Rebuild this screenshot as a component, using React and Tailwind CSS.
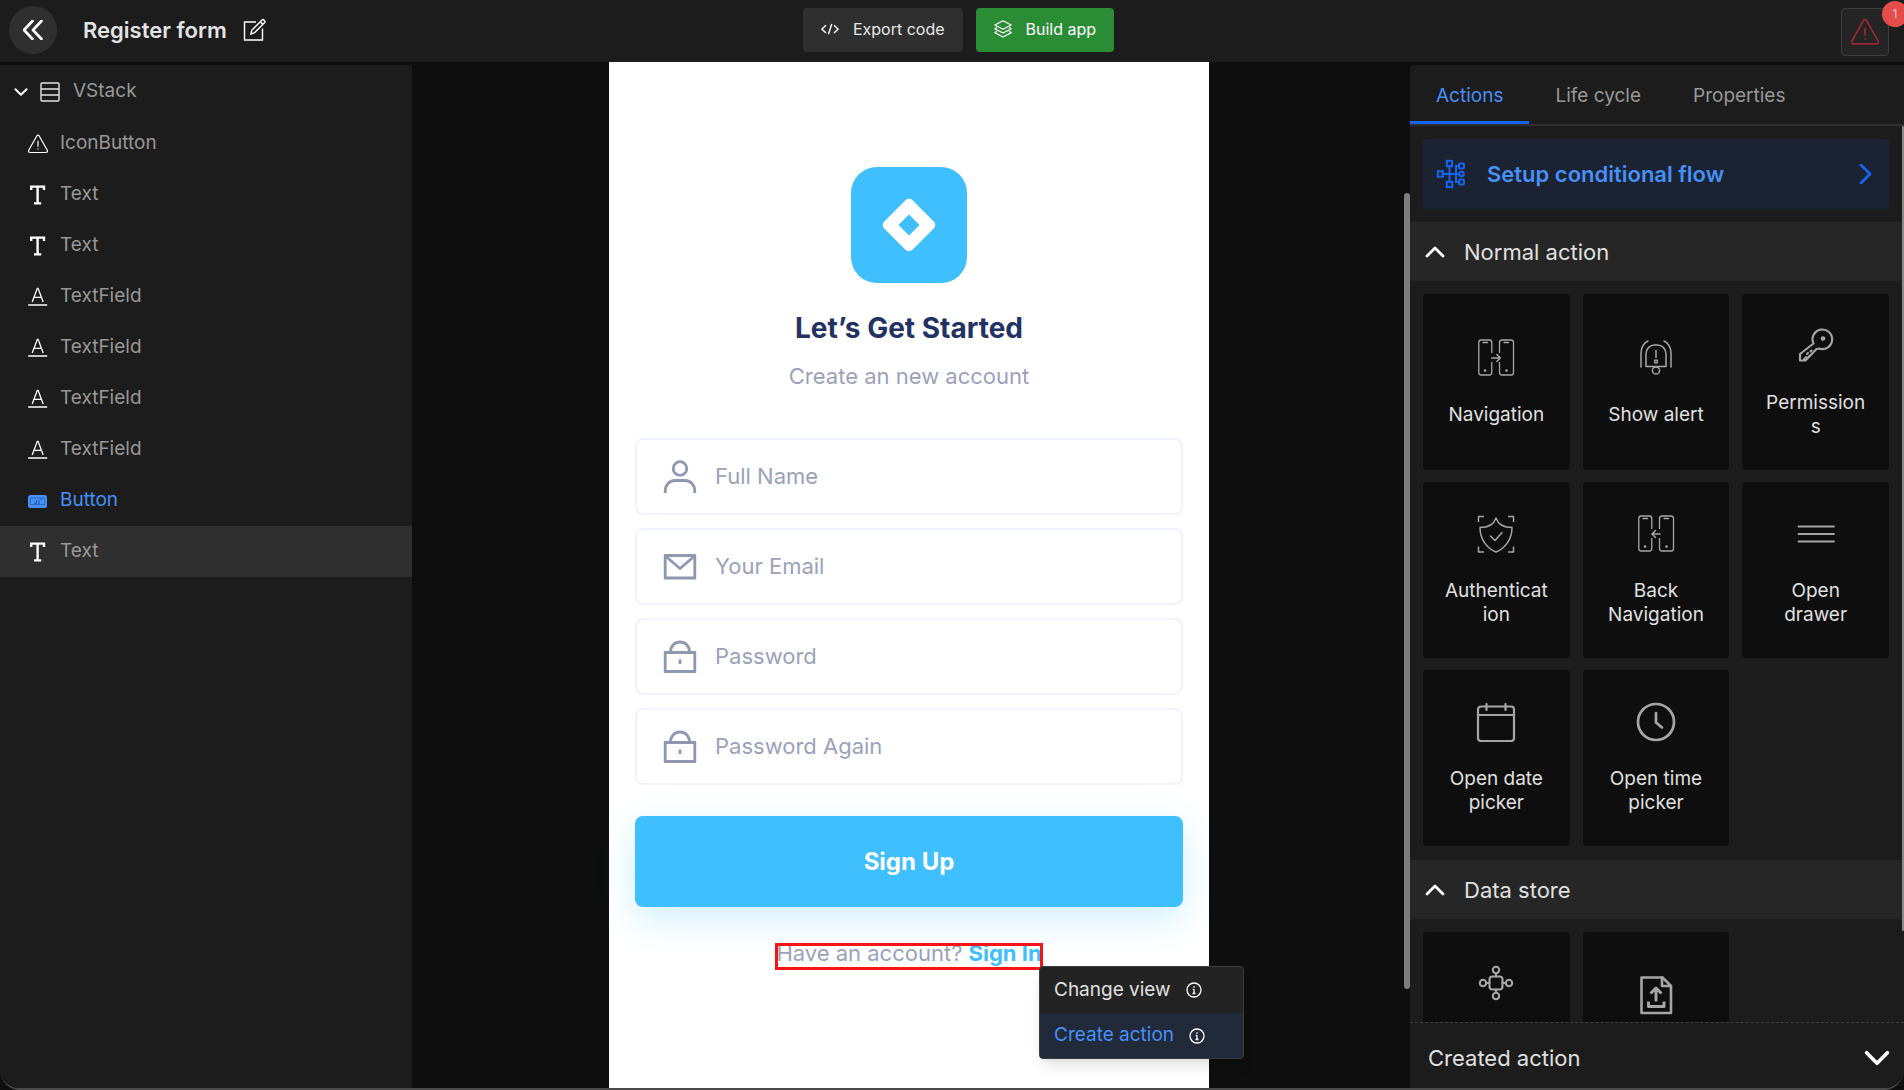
import React, { useState } from "react";
import clsx from "clsx";

// Tree icons
function StackIcon() {
  return (
    <svg width="20" height="20" viewBox="0 0 20 20" fill="none" stroke="#e4e4e4" strokeWidth="1.4">
      <rect x="1" y="1" width="18" height="18" rx="1" />
      <path d="M1 7h18M1 13h18" />
    </svg>
  );
}

function WarningIcon({ size = 20, className = "text-white" }) {
  return (
    <svg className={className} width={size} height={size} viewBox="0 0 20 20" fill="none" stroke="currentColor" strokeWidth="1.2" strokeLinecap="round" strokeLinejoin="round">
      <path d="M8.9 1.8 1 15.8c-.9 1.6-.4 2.7 1.1 2.7h15.8c1.5 0 2-1.1 1.1-2.7L11.1 1.8c-.6-1-1.6-1-2.2 0z" />
      <path d="M10 7.2v5M10 14.8v.2" />
    </svg>
  );
}

function TypeIcon() {
  return (
    <svg width="20" height="20" viewBox="0 0 20 20" fill="none" stroke="#fff" strokeWidth="2.4">
      <path d="M3.2 5V1.6h12.8V5M9.600 1.6v16.8M6 18.4h7.2" />
    </svg>
  );
}

function FieldIcon() {
  return (
    <svg width="20" height="20" viewBox="0 0 20 20" fill="none" stroke="#fff">
      <path d="M4.2 15 9.3 1.300h.8l5.1 13.700M6.1 10.300h7.2" strokeWidth="1.3" />
      <path d="M.2 18h19" strokeWidth="1.5" />
    </svg>
  );
}

function ButtonIcon() {
  return (
    <svg width="20" height="20" viewBox="0 0 20 20" fill="none">
      <rect x="0" y="4" width="19" height="13" rx="2.5" fill="#4690f7" />
      <rect x="2.3" y="7" width="14.4" height="6.6" stroke="#2463bd" strokeWidth=".8" />
      <path d="M8.500 9.5v3M11 9v4M6 12.7h2M12.500 8.3h1.5" stroke="#1d4f99" />
    </svg>
  );
}

// Header icons
function EditIcon() {
  return (
    <svg width="24" height="24" viewBox="0 0 24 24" fill="none" stroke="#fff" strokeWidth="1.4">
      <path d="M13 4H1.5v18h18V10.500" />
      <path d="M7.800 16.200l1-4L19.300 1.700c.8-.8 3.400 1.800 2.600 2.600L11.500 14.700z" strokeLinejoin="round" />
      <path d="M17.200 3.800l2.700 2.700" />
    </svg>
  );
}

function CodeIcon() {
  return (
    <svg width="18" height="18" viewBox="0 0 18 18" fill="none" stroke="#fff" strokeWidth="1.4">
      <path d="M5 5.2.9 9.1 5 13M13 5.2l4.1 3.9L13 13M10.8 4 7.4 14.2" />
    </svg>
  );
}

function LayersIcon() {
  return (
    <svg width="18" height="18" viewBox="0 0 18 18" fill="none" stroke="#fff" strokeWidth="1.2" strokeLinejoin="round">
      <path d="M9 .8 17.2 5 9 9.3.8 5z" />
      <path d="M3 7.5.8 8.8 9 13l8.2-4.2L15 7.5" />
      <path d="M3 11.2.8 12.6 9 17l8.2-4.4-2.2-1.4" />
    </svg>
  );
}

function Chevron({ direction, width = 20, stroke = "#fff" }) {
  const paths = {
    down: "M2 6l8 8 8-8",
    up: "M2 13l8-8 8 8",
    right: "M5 1l9 9-9 9",
  };
  return (
    <svg width={width} height={width} viewBox="0 0 20 20" fill="none" stroke={stroke} strokeWidth="2.8" strokeLinecap="round" strokeLinejoin="round">
      <path d={paths[direction]} />
    </svg>
  );
}

function FlowIcon() {
  return (
    <svg width="30" height="30" viewBox="0 0 30 30" fill="none" stroke="#1565f0" strokeWidth="2">
      <path d="M7 15h15.500M13.500 7v16M22.500 7h-2.500v16h2.500" />
      <rect x="1.800" y="12.300" width="5" height="5.400" />
      <rect x="10.800" y="1.800" width="5.400" height="5.400" />
      <rect x="10.800" y="22.800" width="5.400" height="5.400" />
      <rect x="23" y="4.600" width="5" height="4.800" rx="1" />
      <circle cx="25.500" cy="15" r="2.200" />
      <rect x="23" y="20.600" width="5" height="4.800" rx="1" />
    </svg>
  );
}

function InfoIcon() {
  return (
    <svg width="16" height="16" viewBox="0 0 16 16" fill="none" stroke="#fff" strokeWidth="1.3">
      <circle cx="8" cy="8" r="7" />
      <path d="M8 7.200v4.300M6.700 7.300H8M6.500 11.500h3M8 4.200v1.500" />
    </svg>
  );
}

// Action icons, all drawn in a 40px box
function ActionSvg({ strokeWidth = 1.5, children }) {
  return (
    <svg className="shrink-0" width="40" height="40" viewBox="0 0 40 40" fill="none" stroke="#a6a6a6" strokeWidth={strokeWidth} strokeLinecap="round" strokeLinejoin="round">
      {children}
    </svg>
  );
}

function PhonesIcon({ back }) {
  return (
    <ActionSvg strokeWidth={1.3}>
      <path d="M15.800 14.500V4.500a2.500 2.500 0 0 0-2.500-2.500h-8A2.500 2.500 0 0 0 2.800 4.500v30a2.500 2.500 0 0 0 2.500 2.500h8a2.500 2.500 0 0 0 2.500-2.500V24.500" />
      <path d="M23.500 14.500V4.500A2.500 2.500 0 0 1 26 2h9A2.500 2.500 0 0 1 37.500 4.500v30a2.500 2.500 0 0 1-2.500 2.500h-9a2.500 2.500 0 0 1-2.500-2.500V24.500" />
      <path d="M7 4.500h4.500M28 4.500h4.500" />
      <path d="M9 32.500h.100M30.500 32.500h.100" strokeWidth="2.600" />
      <path d={back ? "M24 20h-8M19.500 16.500l-3.500 3.500 3.500 3.500" : "M15.800 20h8.500M20.800 16.500l3.500 3.500-3.500 3.500"} strokeWidth="1.500" />
    </ActionSvg>
  );
}

function AlertIcon() {
  return (
    <ActionSvg>
      <path d="M10 28.500V16a8.500 9 0 0 1 8.500-9h3a8.500 9 0 0 1 8.500 9v12.500z" />
      <path d="M5 29V14.500C5 9 8.500 4.500 12 3M35 29V14.500C35 9 31.500 4.500 28 3" />
      <path d="M20 12.500v7" />
      <circle cx="20" cy="23.500" r="1.500" />
      <circle cx="20" cy="32.500" r="3.600" />
    </ActionSvg>
  );
}

function KeyIcon() {
  return (
    <ActionSvg strokeWidth={2.1}>
      <path d="M17.500 17.500A9.800 9.800 0 1 1 23 22.500l-2.500.5-11 11.500H4V28z" />
      <path d="M8 33.500l2-2.500M11 28l1-1M12.500 31l1-1M14.500 25.500l1-1" />
      <circle cx="27" cy="12.500" r="1.300" fill="#a6a6a6" />
    </ActionSvg>
  );
}

function ShieldIcon() {
  return (
    <ActionSvg>
      <path d="M20 4c-2 6-7 9.500-16 9.500 0 12 7 21 16 24.500 9-3.500 16-12.500 16-24.500C27 13.500 22 10 20 4z" />
      <path d="M14.500 22l4.500 4.500 7-8" />
      <path d="M8 2.500H2.500V8M32 2.500h5.500V8M8 38H2.500v-5.500M32 38h5.500v-5.500" strokeLinecap="butt" />
    </ActionSvg>
  );
}

function DrawerIcon() {
  return (
    <ActionSvg strokeWidth={1.800}>
      <path d="M2.500 12.500h35.500M2.500 20h35.500M2.500 27.500h35.500" />
    </ActionSvg>
  );
}

function CalendarIcon() {
  return (
    <ActionSvg strokeWidth={2.2}>
      <rect x="2" y="4.500" width="36" height="34.500" rx="3" />
      <path d="M2 13h36M10.500 2v6M29.500 2v6" />
    </ActionSvg>
  );
}

function ClockIcon() {
  return (
    <ActionSvg strokeWidth={2.7}>
      <circle cx="20" cy="20" r="18" />
      <path d="M20 11v9.500l6 5" />
    </ActionSvg>
  );
}

function NetworkIcon() {
  return (
    <ActionSvg strokeWidth={2.1}>
      <rect x="13.500" y="12.500" width="13" height="13" rx="3" />
      <path d="M20 9.500v3M20 25.500v3M10.500 19h3M26.500 19h3" />
      <circle cx="20" cy="6" r="3.200" />
      <circle cx="20" cy="32" r="3.200" />
      <circle cx="7" cy="19" r="3.200" />
      <circle cx="33" cy="19" r="3.200" />
    </ActionSvg>
  );
}

function UploadIcon() {
  return (
    <ActionSvg strokeWidth={2.6}>
      <path d="M5.500 1.500h21l8.500 8.500v27H5.500z" />
      <path d="M26 1.500V10h9" />
      <path d="M20 25.500V12M14.500 17.500 20 12l5.500 5.500M12.500 25.500v5h15.500v-5" strokeWidth="3" strokeLinecap="butt" />
    </ActionSvg>
  );
}

// Form icons
function UserIcon() {
  return (
    <svg width="34" height="34" viewBox="0 0 34 34" fill="none" stroke="#9098b1" strokeWidth="2.800">
      <circle cx="17" cy="8.500" r="6.800" />
      <path d="M2.200 33v-1.500C2.200 25 6 20.500 12 20.500h10c6 0 9.800 4.500 9.800 11V33" />
    </svg>
  );
}

function MailIcon() {
  return (
    <svg width="34" height="34" viewBox="0 0 34 34" fill="none" stroke="#9098b1" strokeWidth="2.800">
      <path d="M2.200 5.500h29.600v22.500H2.200z" />
      <path d="M3 6.500l14 12L31 6.500" />
    </svg>
  );
}

function LockIcon() {
  return (
    <svg width="34" height="34" viewBox="0 0 34 34" fill="none" stroke="#9098b1" strokeWidth="2.800">
      <path d="M2.200 12.500h29.600v19H2.200z" />
      <path d="M7.500 12.500v-1a9.500 9.500 0 0 1 19 0v1M17 19.500v4.500" />
    </svg>
  );
}

const tree = [
  { label: "IconButton", icon: <WarningIcon /> },
  { label: "Text", icon: <TypeIcon /> },
  { label: "Text", icon: <TypeIcon /> },
  { label: "TextField", icon: <FieldIcon /> },
  { label: "TextField", icon: <FieldIcon /> },
  { label: "TextField", icon: <FieldIcon /> },
  { label: "TextField", icon: <FieldIcon /> },
  { label: "Button", icon: <ButtonIcon />, linked: true },
  { label: "Text", icon: <TypeIcon /> },
];

const fields = [
  { id: "full-name", label: "Full Name", type: "text", icon: <UserIcon /> },
  { id: "email", label: "Your Email", type: "email", icon: <MailIcon /> },
  { id: "password", label: "Password", type: "password", icon: <LockIcon /> },
  { id: "password-again", label: "Password Again", type: "password", icon: <LockIcon /> },
];

const normalActions = [
  { id: "navigation", label: "Navigation", icon: <PhonesIcon /> },
  { id: "alert", label: "Show alert", icon: <AlertIcon /> },
  { id: "permissions", label: "Permissions", icon: <KeyIcon /> },
  { id: "auth", label: "Authentication", icon: <ShieldIcon /> },
  { id: "back", label: "Back Navigation", icon: <PhonesIcon back /> },
  { id: "drawer", label: "Open drawer", icon: <DrawerIcon /> },
  { id: "date", label: "Open date picker", icon: <CalendarIcon /> },
  { id: "time", label: "Open time picker", icon: <ClockIcon /> },
];

const dataActions = [
  { id: "network", icon: <NetworkIcon />, tall: true },
  { id: "upload", icon: <UploadIcon /> },
];

function Header() {
  return (
    <header className="flex h-[62px] shrink-0 items-center bg-[#1c1c1c] pr-[15px] pl-[9px]">
      <div className="mb-[2px] flex flex-1 items-center">
        <button aria-label="Back" className="flex h-12 w-12 items-center justify-center rounded-full bg-[#2f2f2f]">
          <svg width="20" height="20" viewBox="0 0 20 20" fill="none" stroke="#fff" strokeWidth="2.600" strokeLinecap="round" strokeLinejoin="round">
            <path d="M9.500 1 1 10l8.500 9M18.500 1 10 10l8.500 9" />
          </svg>
        </button>
        <h1 className="ml-[26px] text-[22px] leading-7 font-semibold text-[#e4e4e4]">Register form</h1>
        <button aria-label="Rename" className="ml-4">
          <EditIcon />
        </button>
      </div>

      <div className="mb-[2px] ml-[19px] flex gap-[13px]">
        <button className="flex h-11 items-center gap-[14px] rounded bg-[#2f2f2f] px-[18px] pb-[2px] text-base text-[#e8e8e8]">
          <CodeIcon />
          Export code
        </button>
        <button className="flex h-11 items-center gap-[14px] rounded bg-[#2b8c36] px-[18px] pb-[2px] text-base text-white">
          <LayersIcon />
          Build app
        </button>
      </div>

      <div className="mt-[2px] flex flex-1 justify-end">
        <button aria-label="Problems" className="relative flex h-12 w-12 items-center justify-center rounded border border-[#3d3d3d] bg-[#242424]">
          <WarningIcon size={28} className="text-[#98263a]" />
          <span className="absolute -top-2 -right-5 flex h-[26px] w-[26px] items-center justify-center rounded-full bg-[#e54d4d] text-xs text-[#f6c4c4]">1</span>
        </button>
      </div>
    </header>
  );
}

function Tree() {
  const [selected, setSelected] = useState(8);

  return (
    <aside className="w-[412px] shrink-0 bg-[#1c1c1c] pt-[2px] text-[19px] text-[#989898]">
      <button className="flex h-[51px] w-full items-center pb-[2px] pl-[14px]">
        <Chevron direction="down" width={14} />
        <span className="mr-[13px] ml-3"><StackIcon /></span>
        VStack
      </button>
      {tree.map((node, i) => (
        <button
          key={i}
          onClick={() => setSelected(i)}
          className={clsx(
            "flex h-[51px] w-full items-center gap-3 pl-7",
            i === selected && "bg-[#2f2f2f]",
            node.linked && "text-[#4690f7]"
          )}
        >
          {node.icon}
          {node.label}
        </button>
      ))}
    </aside>
  );
}

function ContextMenu() {
  return (
    <div className="absolute top-full left-full z-10 -mt-1 -ml-1 w-[205px] overflow-hidden rounded border border-[#3d3d3d] bg-[#232323] text-[19px] shadow-lg">
      <button className="flex h-[46px] w-full items-center gap-[15px] pl-[14px] whitespace-nowrap text-[#e0e0e0]">
        Change view
        <InfoIcon />
      </button>
      <button className="flex h-[45px] w-full items-center gap-[15px] bg-[#212a39] pl-[14px] whitespace-nowrap text-[#4690f7]">
        Create action
        <InfoIcon />
      </button>
    </div>
  );
}

function Canvas() {
  return (
    <main className="ml-[2px] flex min-w-0 flex-1 justify-center">
      {/* Phone screen */}
      <div className="flex w-[600px] flex-col items-center bg-white px-[26px] pt-[105px]">
        <div className="flex h-[116px] w-[116px] shrink-0 items-center justify-center rounded-[26px] bg-[#40bfff]">
          <svg width="60" height="60" viewBox="0 0 60 60">
            <rect x="10" y="10" width="40" height="40" rx="5" fill="#fff" transform="rotate(45 30 30)" />
            <path d="M30 19.500 40.500 30 30 40.500 19.500 30z" fill="#40bfff" />
          </svg>
        </div>
        <h2 className="mt-[29px] text-[28px] leading-8 font-bold text-[#223263]">Let’s Get Started</h2>
        <p className="mt-[18px] text-[22px] leading-7 text-[#9ba2b9]">Create an new account</p>

        <form className="mt-12 flex w-full flex-col gap-[13px]">
          {fields.map((f) => (
            <label key={f.id} htmlFor={f.id} className="flex h-[77px] items-center gap-[18px] rounded-lg border-2 border-[#f0f2ff] pl-[26px]">
              {f.icon}
              <input
                id={f.id}
                type={f.type}
                aria-label={f.label}
                placeholder={f.label}
                className="min-w-0 flex-1 text-[22px] text-[#9ba2b9] outline-none placeholder:text-[#9ba2b9]"
              />
            </label>
          ))}
          <button type="button" className="mt-[18px] h-[91px] rounded-lg bg-[#40bfff] text-2xl font-bold text-white shadow-[0_12px_36px_rgba(64,191,255,0.24)]">
            Sign Up
          </button>
        </form>

        {/* Selected node */}
        <div className="relative mt-9 h-[27px] w-[268px] shrink-0">
          <p className="text-center text-[22px] leading-5 whitespace-nowrap text-[#9ba2b9]">
            Have an account? <a href="#signin" className="font-bold text-[#40bfff]">Sign In</a>
          </p>
          <span className="pointer-events-none absolute inset-0 border-3 border-[#f81414]" />
          <ContextMenu />
        </div>
      </div>
    </main>
  );
}

function ActionSection({ title, actions }) {
  const [open, setOpen] = useState(true);

  return (
    <section>
      <button
        onClick={() => setOpen(!open)}
        className="flex h-[59px] w-full items-center gap-[19px] bg-[#262626] pt-[2px] pl-[15px] text-[22px] text-[#e0e0e0]"
      >
        <Chevron direction={open ? "up" : "down"} />
        {title}
      </button>
      {open && (
        <div className="grid grid-cols-3 gap-x-[13px] gap-y-3 px-[13px] pt-[13px] pb-[14px]">
          {actions.map((action) => (
            <button
              key={action.id}
              aria-label={action.label || action.id}
              className="flex h-44 flex-col items-center justify-center gap-[25px] rounded bg-[#0e0e0e] px-[21px] text-[19px] leading-6 text-[#e0e0e0]"
            >
              {action.icon}
              <span className={clsx("w-full break-words", action.tall ? "min-h-12" : "min-h-6")}>{action.label}</span>
            </button>
          ))}
        </div>
      )}
    </section>
  );
}

function ActionPanel() {
  const [tab, setTab] = useState("Actions");

  return (
    <aside className="flex w-[494px] shrink-0 flex-col rounded-tl bg-[#1c1c1c]">
      <nav className="flex h-[61px] shrink-0 border-b-2 border-[#2f2f2f] text-[19px]">
        {["Actions", "Life cycle", "Properties"].map((name) => (
          <button
            key={name}
            onClick={() => setTab(name)}
            className={clsx(
              "border-b-3 px-[26px] pt-[7px]",
              tab === name ? "border-[#1565f0] text-[#4690f7]" : "border-transparent text-[#989898]"
            )}
          >
            {name}
          </button>
        ))}
      </nav>

      <div className="flex min-h-0 flex-1">
        <div className="min-w-0 flex-1 overflow-hidden">
          <div className="p-[13px]">
            <button className="flex h-[70px] w-full items-center rounded bg-[#1b2332] px-[13px] text-[22px] font-semibold text-[#4690f7]">
              <FlowIcon />
              <span className="ml-[21px] flex-1 text-left">Setup conditional flow</span>
              <Chevron direction="right" stroke="#1565f0" />
            </button>
          </div>
          <ActionSection title="Normal action" actions={normalActions} />
          <ActionSection title="Data store" actions={dataActions} />
        </div>
        <div className="h-[805px] w-[2px] rounded-full bg-[#8a8a8a]" />
      </div>

      <button className="flex h-[66px] shrink-0 items-center justify-between border-t border-dashed border-[#3d3d3d] pt-[5px] pr-[14px] pl-[18px] text-[22px] text-[#e0e0e0]">
        Created action
        <Chevron direction="down" width={26} />
      </button>
    </aside>
  );
}

export default function App() {
  return (
    <div className="flex h-screen flex-col overflow-hidden bg-[#0e0e0e] font-['Inter',sans-serif]">
      <Header />
      <div className="flex min-h-0 flex-1 overflow-hidden rounded-b-[20px] border-b-2 border-[#4a4a4a]">
        <div className="flex pt-[3px]">
          <Tree />
        </div>
        <Canvas />
        <div className="mt-[131px] h-[796px] w-[6px] rounded-full bg-[#7d7d7d]" />
        <div className="flex pt-[3px]">
          <ActionPanel />
        </div>
      </div>
    </div>
  );
}
